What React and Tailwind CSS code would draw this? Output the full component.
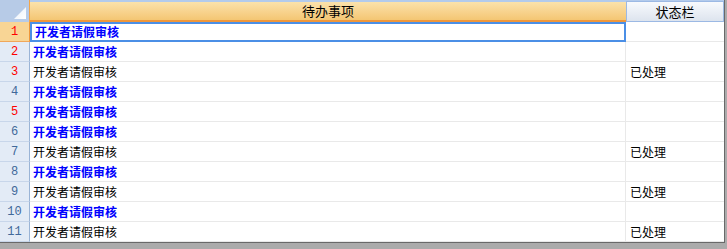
import React from 'react';

const rows = [
  { n: 1, done: false, red: true },
  { n: 2, done: false, red: true },
  { n: 3, done: true, red: true },
  { n: 4, done: false, red: false },
  { n: 5, done: false, red: true },
  { n: 6, done: false, red: false },
  { n: 7, done: true, red: false },
  { n: 8, done: false, red: false },
  { n: 9, done: true, red: false },
  { n: 10, done: false, red: false },
  { n: 11, done: true, red: false },
];

const cjk = "font-['Noto_Sans_CJK_SC','Noto_Sans',sans-serif]";

export default function App() {
  return (
    <div className="w-[727px] h-[249px] bg-[#ababab] overflow-hidden">
      <div className="w-[725px] h-[243px] bg-white border-r border-b border-[#696969] flex flex-col">
        {/* header */}
        <div className="flex h-[22px] bg-[#b3cbec]">
          <div className="relative w-[30px] h-[22px] bg-[#b7cbe7] border-r border-[#f3a54a]">
            <svg className="absolute right-[3px] bottom-[3px]" width="12" height="12" viewBox="0 0 12 12">
              <defs>
                <linearGradient id="tri" x1="0" y1="0" x2="1" y2="1">
                  <stop offset="0" stopColor="#e6eef9" />
                  <stop offset="1" stopColor="#ffffff" />
                </linearGradient>
              </defs>
              <polygon points="12,0 12,12 0,12" fill="url(#tri)" />
            </svg>
          </div>
          <div className={`w-[596px] mt-[2px] h-[20px] bg-gradient-to-b from-[#fbe2ab] to-[#f4c673] border-b-2 border-[#f0973a] flex items-center justify-center text-[13px] text-black ${cjk}`}>
            待办事项
          </div>
          <div className={`w-[98px] mt-[1px] h-[21px] bg-gradient-to-b from-[#f8fafd] to-[#dde4ee] border border-[#9cb9e4] flex items-center justify-center text-[13px] text-black ${cjk}`}>
            状态栏
          </div>
        </div>
        {/* rows */}
        {rows.map((r, i) => {
          const selected = i === 0;
          return (
            <div key={r.n} className="flex h-[20px]">
              <div
                className={`w-[30px] h-[20px] flex items-center justify-center text-[12px] font-['Liberation_Mono',monospace] border-r border-b ${
                  selected
                    ? 'bg-[#f8d595] border-r-[#f0973a] border-b-[#f0a75a]'
                    : 'bg-[#e3ebf6] border-r-[#9ab4d6] border-b-[#c8d6ea]'
                } ${r.red ? 'text-[#ff0000]' : 'text-[#41699a]'}`}
              >
                {r.n}
              </div>
              <div
                className={`w-[596px] h-[20px] flex items-center pl-[3px] text-[12px] ${cjk} ${
                  selected ? 'border-2 border-[#4b8fe6] pl-[1px]' : 'border-b border-r border-[#e9e9e9]'
                } ${r.done ? 'text-black' : 'text-[#0000ff] font-bold'}`}
              >
                开发者请假审核
              </div>
              <div className={`w-[98px] h-[20px] flex items-center pl-[4px] text-[12px] text-black border-b border-[#e9e9e9] ${cjk}`}>
                {r.done ? '已处理' : ''}
              </div>
            </div>
          );
        })}
      </div>
    </div>
  );
}
